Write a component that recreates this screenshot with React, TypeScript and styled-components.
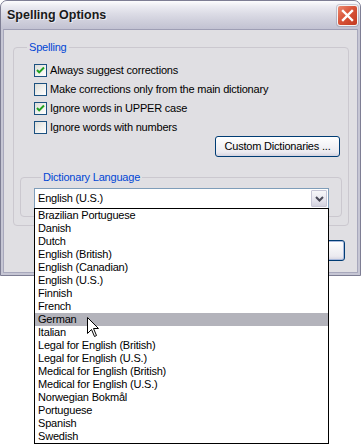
import React from 'react';
import styled, { createGlobalStyle } from 'styled-components';

const GlobalStyle = createGlobalStyle`
  html, body { margin: 0; padding: 0; background: #ffffff; }
  #root { min-height: 447px; }
  body {
    font-family: "Liberation Sans", Arial, sans-serif;
    font-size: 11px;
    letter-spacing: -0.2px;
    color: #000;
  }
  * { box-sizing: border-box; }
`;

const Page = styled.div`
  min-height: 447px;
  position: relative;
`;

const Window = styled.div`
  position: relative;
  width: 361px;
  height: 276px;
  display: flex;
  flex-direction: column;
  border: 1px solid #7e7e94;
  border-radius: 7px 7px 0 0;
  background: #c6c6d4;
`;

const TitleBar = styled.div`
  height: 28px;
  flex: none;
  display: flex;
  align-items: center;
  justify-content: space-between;
  padding: 0 2px 0 6px;
  border-radius: 6px 6px 0 0;
  background: linear-gradient(180deg, #fdfdfe 0%, #ececf2 18%, #dcdce6 45%, #cdcdda 75%, #c2c2d2 100%);
`;

const Title = styled.span`
  font-family: "Liberation Sans", Arial, sans-serif;
  font-weight: bold;
  font-size: 12.5px;
  letter-spacing: 0;
  color: #1a1a1a;
  text-shadow: 1px 1px 0 rgba(255, 255, 255, 0.6);
`;

const CloseButton = styled.div`
  width: 21px;
  height: 21px;
  border: 1px solid #f4f4f4;
  border-radius: 3px;
  background: linear-gradient(135deg, #ec8a70 0%, #d9553a 45%, #c2381f 100%);
  display: flex;
  align-items: center;
  justify-content: center;
  box-shadow: 0 0 0 1px rgba(120, 120, 140, 0.35);
`;

const Frame = styled.div`
  flex: 1;
  display: flex;
  padding: 0 2px 2px;
`;

const Client = styled.div`
  flex: 1;
  display: flex;
  flex-direction: column;
  background: #e0dfe3;
  border: 1px solid #a8a8bc;
  border-top-color: #9e9eb4;
  padding: 17px 8px 0 9px;
`;

const Group = styled.div`
  border: 1px solid #cbc8cf;
  border-radius: 4px;
  padding: 0 6px 8px 6px;
  display: flex;
  flex-direction: column;
`;

const GroupLabel = styled.div`
  align-self: flex-start;
  margin: -7px 0 0 7px;
  padding: 0 2px;
  font-size: 11px;
  line-height: 13px;
  color: #0046d5;
  background: #e0dfe3;
`;

const CheckList = styled.div`
  display: flex;
  flex-direction: column;
  gap: 6px;
  padding: 10px 0 0 14px;
`;

const CheckRow = styled.label`
  display: flex;
  align-items: center;
  gap: 3px;
  height: 13px;
  line-height: 13px;
  white-space: nowrap;
`;

const CheckBox = styled.span`
  width: 13px;
  height: 13px;
  flex: none;
  border: 1px solid #1c5180;
  background: linear-gradient(135deg, #dcdcd7 0%, #f1f1ef 55%, #ffffff 100%);
  display: flex;
  align-items: center;
  justify-content: center;
`;

const RightRow = styled.div<{ $top: number; $right: number }>`
  display: flex;
  justify-content: flex-end;
  gap: 6px;
  margin-top: ${(p) => p.$top}px;
  padding-right: ${(p) => p.$right}px;
`;

const Button = styled.div<{ $width: number; $default?: boolean }>`
  width: ${(p) => p.$width}px;
  height: 21px;
  border: 1px solid #003c74;
  border-radius: 3px;
  background: linear-gradient(180deg, #ffffff 0%, #f6f6f8 35%, #ebeaf0 80%, #d4d3e0 100%);
  box-shadow: ${(p) => (p.$default ? 'inset 0 0 0 1px #a9b9dc' : 'none')};
  display: flex;
  align-items: center;
  justify-content: center;
  line-height: 13px;
`;

const InnerGroup = styled(Group)`
  margin-top: 20px;
  padding: 0 12px 7px 13px;
`;

const Combo = styled.div`
  position: relative;
  margin-top: 4px;
  height: 21px;
  border: 1px solid #7f9db9;
  background: #ffffff;
  display: flex;
  align-items: center;
  justify-content: space-between;
  padding: 1px 1px 1px 3px;
`;

const ComboText = styled.span`
  line-height: 13px;
`;

const ComboArrow = styled.div`
  width: 16px;
  height: 17px;
  border: 1px solid #c7c6d6;
  border-radius: 1px;
  background: linear-gradient(180deg, #f7f7f9 0%, #e6e5ee 60%, #d3d2de 100%);
  display: flex;
  align-items: center;
  justify-content: center;
`;

const DropList = styled.ul`
  position: absolute;
  top: 100%;
  left: -1px;
  right: -1px;
  margin: 0;
  padding: 0;
  list-style: none;
  border: 1px solid #000;
  background: #ffffff;
  z-index: 10;
`;

const DropItem = styled.li<{ $hover?: boolean }>`
  height: 13px;
  line-height: 13px;
  padding-left: 3px;
  white-space: nowrap;
  background: ${(p) => (p.$hover ? '#b3b3bb' : 'transparent')};
`;

const Cursor = styled.svg`
  position: absolute;
  left: 52px;
  top: 108px;
`;

const CheckMark = () => (
  <svg width="9" height="9" viewBox="0 0 9 9">
    <path d="M1 4 L3.2 6.4 L8 1.5" fill="none" stroke="#21a121" strokeWidth="2" />
  </svg>
);

const options = [
  { label: 'Always suggest corrections', checked: true },
  { label: 'Make corrections only from the main dictionary', checked: false },
  { label: 'Ignore words in UPPER case', checked: true },
  { label: 'Ignore words with numbers', checked: false },
];

const languages = [
  'Brazilian Portuguese',
  'Danish',
  'Dutch',
  'English (British)',
  'English (Canadian)',
  'English (U.S.)',
  'Finnish',
  'French',
  'German',
  'Italian',
  'Legal for English (British)',
  'Legal for English (U.S.)',
  'Medical for English (British)',
  'Medical for English (U.S.)',
  'Norwegian Bokmål',
  'Portuguese',
  'Spanish',
  'Swedish',
];

export default function App() {
  return (
    <Page>
      <GlobalStyle />
      <Window>
        <TitleBar>
          <Title>Spelling Options</Title>
          <CloseButton>
            <svg width="13" height="13" viewBox="0 0 13 13">
              <path d="M2 2 L11 11 M11 2 L2 11" stroke="#ffffff" strokeWidth="2.4" strokeLinecap="square" />
            </svg>
          </CloseButton>
        </TitleBar>
        <Frame>
          <Client>
            <Group>
              <GroupLabel>Spelling</GroupLabel>
              <CheckList>
                {options.map((o) => (
                  <CheckRow key={o.label}>
                    <CheckBox>{o.checked && <CheckMark />}</CheckBox>
                    {o.label}
                  </CheckRow>
                ))}
              </CheckList>
              <RightRow $top={2} $right={2}>
                <Button $width={125}>Custom Dictionaries ...</Button>
              </RightRow>
              <InnerGroup>
                <GroupLabel>Dictionary Language</GroupLabel>
                <Combo>
                  <ComboText>English (U.S.)</ComboText>
                  <ComboArrow>
                    <svg width="9" height="6" viewBox="0 0 9 6">
                      <path d="M1 1 L4.5 4.5 L8 1" fill="none" stroke="#4a4a58" strokeWidth="2" />
                    </svg>
                  </ComboArrow>
                  <DropList>
                    {languages.map((l) => (
                      <DropItem key={l} $hover={l === 'German'}>
                        {l}
                      </DropItem>
                    ))}
                    <Cursor width="13" height="21" viewBox="0 0 13 21">
                      <path
                        d="M0.5 0.5 V16.5 L4.5 12.5 L7.5 19.5 L9.5 18.5 L6.5 11.5 H11.5 Z"
                        fill="#ffffff"
                        stroke="#000000"
                        strokeWidth="1"
                      />
                    </Cursor>
                  </DropList>
                </Combo>
              </InnerGroup>
            </Group>
            <RightRow $top={14} $right={4}>
              <Button $width={75}>OK</Button>
              <Button $width={75} $default>
                Cancel
              </Button>
            </RightRow>
          </Client>
        </Frame>
      </Window>
    </Page>
  );
}
